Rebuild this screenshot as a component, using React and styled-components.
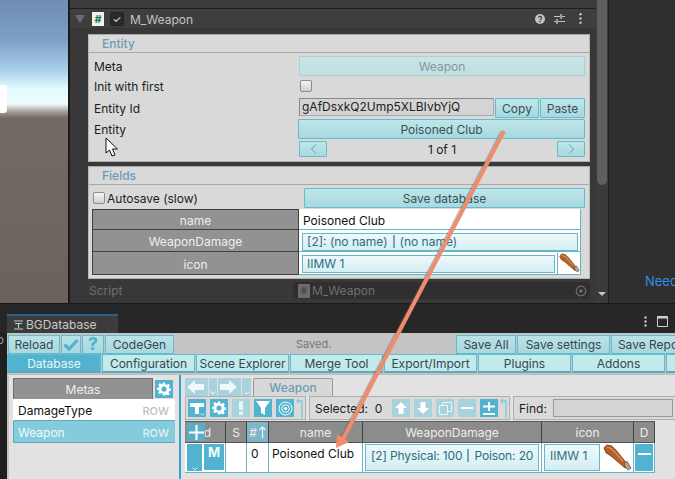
import React from "react";
import styled, { createGlobalStyle } from "styled-components";

const Global = createGlobalStyle`
  html, body { margin: 0; padding: 0; background: #1f1f1f; }
  * { box-sizing: border-box; }
`;

const Page = styled.div`
  position: relative;
  width: 675px;
  height: 479px;
  overflow: hidden;
  display: flex;
  flex-direction: column;
  font-family: Inter, "Liberation Sans", sans-serif;
  font-size: 12px;
  color: #1c1c1c;
  background: #1f1f1f;
`;
const Top = styled.div`
  height: 303px;
  display: flex;
  flex: none;
`;
const Scene = styled.div`
  width: 68px;
  flex: none;
  display: flex;
  align-items: flex-start;
  padding-top: 85px;
  background: linear-gradient(#6f8db5 0, #7ea0c6 40px, #a8d0e8 70px, #e0faff 88px, #f0fbfb 104px, #a09a96 112px, #736a65 118px, #6b625e 303px);
`;
const SceneChip = styled.div`
  width: 7px;
  height: 28px;
  background: #fff;
  border-radius: 0 3px 3px 0;
`;
const Split = styled.div`
  width: 2px;
  flex: none;
  background: #1b1b1b;
`;
const Inspector = styled.div`
  width: 526px;
  flex: none;
  display: flex;
  flex-direction: column;
  background: #383838;
`;
const Sliver = styled.div`
  height: 9px;
  flex: none;
  background: #3c3c3c;
  border-bottom: 1px solid #1e1e1e;
`;
const CompHead = styled.div`
  height: 20px;
  flex: none;
  display: flex;
  align-items: center;
  padding: 0 14px 0 5px;
  background: #3e3e3e;
  border-bottom: 1px solid #343434;
`;
const Tri = styled.div`
  width: 0;
  height: 0;
  border-left: 5px solid transparent;
  border-right: 5px solid transparent;
  border-top: 8px solid #6a6a6a;
  margin-right: 7px;
`;
const ScriptIcon = styled.div`
  width: 12px;
  height: 14px;
  flex: none;
  background: ${(p) => p.$bg || "#f2f2f2"};
  color: ${(p) => p.$fg || "#1e7a3a"};
  font-size: ${(p) => p.$size || 11}px;
  font-weight: 700;
  line-height: 14px;
  text-align: center;
  margin-right: 6px;
`;
const Toggle = styled.div`
  width: 14px;
  height: 14px;
  border-radius: 2px;
  background: #2a2a2a;
  border: 1px solid #212121;
  color: #eee;
  font-size: 10px;
  line-height: 12px;
  text-align: center;
  margin-right: 6px;
`;
const CompTitle = styled.div`
  color: #c4c4c4;
  font-size: 12px;
  flex: 1;
  padding-top: 1px;
`;
const HeadIcons = styled.div`
  display: flex;
  align-items: center;
  gap: 9px;
`;
const Panel = styled.div`
  margin: ${(p) => p.$top}px 0 0 18px;
  width: 502px;
  flex: none;
  background: #d9d9d9;
  border-top: 1px solid #a8a8a8;
  border-left: 1px solid #b8b8b8;
  border-right: 1px solid #b8b8b8;
  border-bottom: 1px solid #b0b0b0;
  height: ${(p) => p.$h}px;
  display: flex;
  flex-direction: column;
`;
const PanelHead = styled.div`
  height: 18px;
  flex: none;
  border-bottom: 1px solid #a8a8a8;
  padding-left: 13px;
  line-height: 17px;
  font-weight: 500;
  color: #6f9ab4;
  font-size: 12px;
`;
const FormRow = styled.div`
  display: grid;
  grid-template-columns: 205px 1fr;
  align-items: center;
  height: ${(p) => p.$h}px;
  margin-top: ${(p) => p.$mt || 0}px;
  padding: 0 4px 0 5px;
`;
const FieldLabel = styled.div`
  font-size: 12px;
  color: #1c1c1c;
`;
const TealBtn = styled.div`
  height: ${(p) => p.$h || 19}px;
  width: ${(p) => (p.$w ? p.$w + "px" : "auto")};
  flex: ${(p) => (p.$w ? "none" : 1)};
  margin-left: ${(p) => p.$ml || 0}px;
  display: flex;
  align-items: center;
  justify-content: center;
  border: 1px solid ${(p) => (p.$faded ? "#9ed4da" : "#62bccb")};
  border-radius: 1px;
  background: ${(p) =>
    p.$faded
      ? "linear-gradient(#cbe4e6, #c2dfe2)"
      : "linear-gradient(#bfe6e9, #a7d9df)"};
  color: ${(p) => (p.$faded ? "#83979c" : "#3b4f57")};
  font-size: 12px;
  white-space: nowrap;
`;
const Check = styled.div`
  width: 12px;
  height: 12px;
  flex: none;
  margin-left: ${(p) => p.$ml || 0}px;
  border: 1px solid #8c8c8c;
  border-radius: 2px;
  background: linear-gradient(#f6f6f6, #cfcfcf);
`;
const IdRow = styled.div`
  display: flex;
  align-items: flex-start;
  gap: 1px;
  height: 21px;
`;
const IdInput = styled.div`
  width: 195px;
  height: 18px;
  flex: none;
  background: #d4d4d4;
  border: 1px solid #888;
  border-right-color: #aaa;
  border-bottom-color: #aaa;
  font-size: 12px;
  line-height: 16px;
  padding-left: 2px;
  color: #222;
  white-space: nowrap;
`;
const EntityValue = styled.div`
  display: flex;
  margin-left: -1px;
`;
const NavRow = styled.div`
  display: grid;
  grid-template-columns: 28px 1fr 28px;
  align-items: center;
`;
const Counter = styled.div`
  text-align: center;
  font-size: 12px;
`;
const AutoRow = styled.div`
  display: flex;
  align-items: center;
  height: 20px;
  margin-top: 3px;
  padding: 0 4px 0 4px;
`;
const AutoLabel = styled.div`
  margin-left: 2px;
  width: 197px;
  font-size: 12px;
`;
const FieldsTable = styled.div`
  margin: 1px 0 0 3px;
  width: 489px;
  display: grid;
  grid-template-columns: 207px 1fr;
  grid-template-rows: 21px 22px 23px;
`;
const NameCell = styled.div`
  background: #929292;
  border: 1px solid #3f3f3f;
  border-top-width: ${(p) => (p.$first ? 1 : 0)}px;
  padding-top: 2px;
  display: flex;
  align-items: center;
  justify-content: center;
  color: #eeeeee;
  font-size: 12px;
`;
const ValueCell = styled.div`
  background: #fff;
  border-right: 1px solid #68b4c4;
  border-bottom: 1px solid #68b4c4;
  display: flex;
  align-items: center;
  padding: ${(p) => p.$pad || "2px 2px 0 3px"};
  font-size: 12px;
  color: #111;
`;
const LightField = styled.div`
  flex: ${(p) => (p.$w ? "none" : 1)};
  width: ${(p) => (p.$w ? p.$w + "px" : "auto")};
  height: ${(p) => p.$h || 18}px;
  display: flex;
  align-items: center;
  border: 1px solid #67b7c8;
  background: linear-gradient(#eef9fb, #d3eef3);
  color: #2c6f80;
  font-size: 12px;
  padding: 0 0 ${(p) => p.$pb || 0}px ${(p) => p.$pl || 4}px;
  letter-spacing: ${(p) => p.$ls || 0}px;
  white-space: nowrap;
`;
const Sep = styled.span`
  display: inline-block;
  width: 2px;
  height: 13px;
  margin: 0 5px 0 5px;
  background: #6ea9b8;
`;
const ThumbCell = styled.div`
  width: 23px;
  height: 21px;
  flex: none;
  margin-left: 2px;
  padding-left: 1px;
  border-left: 1px solid #68b4c4;
`;
const ScriptRow = styled.div`
  display: flex;
  align-items: center;
  height: 17px;
  margin-top: 3px;
  padding-left: 19px;
`;
const ScriptLabel = styled.div`
  width: 204px;
  color: #6f6f6f;
  font-size: 12px;
`;
const ScriptField = styled.div`
  width: 297px;
  height: 17px;
  display: flex;
  align-items: center;
  padding: 0 3px 0 5px;
  background: #2f2f2f;
  border-radius: 3px;
  color: #6f6f6f;
  font-size: 12px;
`;
const ScriptName = styled.div`
  flex: 1;
  margin-left: -4px;
`;
const Scroll = styled.div`
  width: 12px;
  flex: none;
  display: flex;
  flex-direction: column;
  align-items: center;
  background: #3a3a3a;
`;
const Thumb = styled.div`
  width: 10px;
  height: 185px;
  background: #5f5f5f;
  border-radius: 0 0 5px 5px;
`;
const ScrollArrow = styled.div`
  margin-top: 107px;
  width: 0;
  height: 0;
  border-left: 4px solid transparent;
  border-right: 4px solid transparent;
  border-top: 4px solid #c4c4c4;
`;
const RightPane = styled.div`
  flex: 1;
  background: #2f2f2f;
  border-left: 1px solid #1b1b1b;
  padding: 273px 0 0 36px;
  color: #2f8fe6;
  font-size: 13px;
  white-space: nowrap;
  overflow: hidden;
`;
const Bottom = styled.div`
  flex: 1;
  display: flex;
  flex-direction: column;
  background: #1f1f1f;
  min-height: 0;
`;
const TabStrip = styled.div`
  height: 30px;
  flex: none;
  display: flex;
  align-items: flex-end;
  padding-left: 7px;
  border-top: 1px solid #191919;
  background: #272727;
`;
const Tab = styled.div`
  width: 111px;
  height: 19px;
  background: #3c3c3c;
  border-top: 2px solid #2b5f8e;
  display: flex;
  align-items: center;
  padding-left: 6px;
  gap: 2px;
  color: #c8c8c8;
  font-size: 12px;
`;
const WinIcons = styled.div`
  margin-left: auto;
  display: flex;
  align-items: center;
  gap: 10px;
  height: 24px;
  width: 31px;
  flex: none;
  overflow: hidden;
`;
const BottomBody = styled.div`
  flex: 1;
  display: flex;
  min-height: 0;
`;
const LeftGutter = styled.div`
  width: 7px;
  flex: none;
  overflow: hidden;
  color: #999;
  font-size: 12px;
  line-height: 14px;
  text-indent: -7px;
  white-space: nowrap;
`;
const Win = styled.div`
  width: 668px;
  flex: none;
  display: flex;
  flex-direction: column;
  background: #c4c4c4;
  overflow: hidden;
`;
const ToolRow = styled.div`
  height: 21px;
  flex: none;
  display: flex;
  align-items: center;
  padding: 1px 0 0 1px;
  gap: 1px;
`;
const ToolBtn = styled.div`
  width: ${(p) => p.$w}px;
  height: 19px;
  flex: none;
  display: flex;
  align-items: center;
  justify-content: center;
  border: 1px solid #62bccb;
  background: linear-gradient(#b9e2e7, #a8d8df);
  color: #35474f;
  font-size: 12px;
  white-space: nowrap;
  overflow: hidden;
`;
const HelpMark = styled.span`
  color: #4fb2d0;
  font-weight: 800;
  font-size: 17px;
`;
const Saved = styled.div`
  margin-left: 121px;
  width: 159px;
  flex: none;
  color: #777;
  font-size: 11px;
`;
const TabsRow = styled.div`
  height: 19px;
  flex: none;
  display: flex;
  gap: 1px;
`;
const WinTab = styled.div`
  width: ${(p) => p.$w}px;
  flex: none;
  height: 19px;
  display: flex;
  align-items: center;
  justify-content: center;
  white-space: nowrap;
  font-size: 12px;
  border: 1px solid #62bccb;
  border-bottom: 2px solid #62a8bb;
  background: ${(p) => (p.$active ? "#52b3d1" : "linear-gradient(#c5ecec, #bfe9ea)")};
  color: ${(p) => (p.$active ? "#e8f6fa" : "#35474f")};
`;
const Content = styled.div`
  flex: 1;
  margin: 1px 0 0 2px;
  display: flex;
  background: #e2e2e2;
  border-top: 1px solid #bdbdbd;
  min-height: 0;
`;
const MetaPane = styled.div`
  width: 170px;
  flex: none;
  padding: 3px 4px 0 4px;
`;
const MetaHead = styled.div`
  display: flex;
  align-items: center;
  gap: 2px;
`;
const MetaTitle = styled.div`
  width: 140px;
  height: 21px;
  background: #929292;
  border: 1px solid #6e6e6e;
  border-bottom: none;
  color: #eee;
  display: flex;
  align-items: center;
  justify-content: center;
  font-size: 12px;
`;
const IconBtn = styled.div`
  width: 18px;
  height: 18px;
  flex: none;
  background: ${(p) => (p.$dim ? "#a8d2dc" : "#52b3d1")};
  display: flex;
  align-items: center;
  justify-content: center;
  position: relative;
`;
const MiniChevron = styled.svg`
  position: absolute;
  right: 1px;
  bottom: 1px;
`;
const MetaRow = styled.div`
  width: 162px;
  height: 22px;
  display: flex;
  align-items: center;
  justify-content: space-between;
  padding: 2px 6px 0 4px;
  font-size: 12px;
  background: ${(p) => (p.$sel ? "#85cbde" : "#fff")};
  color: ${(p) => (p.$sel ? "#f2fafc" : "#111")};
  border-bottom: 1px solid #62a9bc;
  border-left: 1px solid ${(p) => (p.$sel ? "#62a9bc" : "#fff")};
`;
const RowTag = styled.span`
  font-size: 11px;
  font-weight: 500;
  color: ${(p) => (p.$sel ? "#e0f3f7" : "#c0c0c0")};
`;
const VDiv = styled.div`
  width: 2px;
  flex: none;
  background: #2fa3c9;
`;
const MainPane = styled.div`
  flex: 1;
  padding: 3px 0 0 4px;
  min-width: 0;
  display: flex;
  flex-direction: column;
`;
const NavBar = styled.div`
  display: flex;
  align-items: flex-end;
  height: 18px;
  flex: none;
  gap: 1px;
`;
const NavBtn = styled.div`
  width: 23px;
  height: 18px;
  flex: none;
  background: #a8d2dc;
  display: flex;
  align-items: center;
  padding-left: 2px;
`;
const NavDrop = styled.div`
  width: ${(p) => p.$w || 8}px;
  height: 18px;
  flex: none;
  background: #a8d2dc;
  display: flex;
  align-items: flex-end;
  justify-content: center;
  padding-bottom: 1px;
`;
const MetaTab = styled.div`
  width: 80px;
  height: 18px;
  flex: none;
  margin-left: 1px;
  background: #d8d8d8;
  border: 1px solid #9a9a9a;
  border-bottom: none;
  border-radius: 2px 2px 0 0;
  color: #6f9ab4;
  font-weight: 500;
  display: flex;
  align-items: center;
  justify-content: center;
  font-size: 12px;
`;
const BarRow = styled.div`
  height: 25px;
  flex: none;
  display: flex;
  gap: 3px;
`;
const BarBox = styled.div`
  width: ${(p) => p.$w}px;
  flex: none;
  height: 24px;
  background: #dadada;
  border: 1px solid #b0b0b0;
  display: flex;
  align-items: center;
  gap: ${(p) => p.$gap || 4}px;
  padding: 0 0 0 ${(p) => p.$pl || 2}px;
  font-size: 12px;
  white-space: nowrap;
`;
const SelectedLabel = styled.span`
  width: 73px;
  flex: none;
`;
const ReturnIcon = styled.svg`
  margin-left: -2px;
  flex: none;
`;
const FindInput = styled.div`
  width: 120px;
  height: 18px;
  background: #d4d4d4;
  border: 1px solid #9a9a9a;
`;
const GridTable = styled.div`
  display: grid;
  grid-template-columns: 41px 21px 22px 94px 179px 92px 21px;
  grid-template-rows: 22px 30px;
  width: 470px;
  position: relative;
`;
const GridHead = styled.div`
  background: ${(p) => (p.$blue ? "#7fb5c4" : "#8c8c8c")};
  border-right: 1px solid #444;
  border-top: 1px solid #5a5a5a;
  border-bottom: 1px solid #555;
  color: #ededed;
  display: flex;
  align-items: center;
  justify-content: ${(p) => p.$justify || "center"};
  padding-right: ${(p) => p.$pr || 0}px;
  font-size: 12px;
  white-space: nowrap;
  gap: 2px;
`;
const GridCell = styled.div`
  background: #fff;
  border-right: 1px solid #68b4c4;
  border-bottom: 1px solid #68b4c4;
  display: flex;
  align-items: flex-start;
  padding: ${(p) => p.$pad || "1px 0 0 0"};
  gap: ${(p) => p.$gap || 0}px;
  font-size: 12px;
  color: #111;
  white-space: nowrap;
`;
const AddBtn = styled.div`
  position: absolute;
  left: 2px;
  top: 2px;
  width: 18px;
  height: 18px;
  background: rgba(82, 179, 209, 0.85);
  display: flex;
  align-items: center;
  justify-content: center;
`;
const RowBlock = styled.div`
  width: ${(p) => p.$w}px;
  height: ${(p) => p.$h}px;
  flex: none;
  background: #52b3d1;
  color: #f4fbfd;
  font-weight: 700;
  font-size: 13px;
  display: flex;
  justify-content: center;
  align-items: ${(p) => p.$align || "flex-start"};
  padding-top: ${(p) => p.$pt || 0}px;
  position: relative;
`;
const Overlay = styled.svg`
  position: absolute;
  left: 0;
  top: 0;
  pointer-events: none;
`;
const Pointer = styled.svg`
  position: absolute;
  left: 105px;
  top: 137px;
`;

const Gear = ({ s = 14, c = "#fff" }) => (
  <svg width={s} height={s} viewBox="0 0 24 24">
    <path
      fill={c}
      fillRule="evenodd"
      d="M10 1h4l.6 3.2 2 .8 2.700-1.900 2.800 2.800-1.900 2.700.8 2 3 .6v4l-3.200.6-.8 2 1.900 2.700-2.800 2.800-2.700-1.900-2 .8L14 23h-4l-.6-3.200-2-.8-2.700 1.900-2.800-2.800 1.900-2.700-.8-2L0 14v-4l3.200-.6.8-2L2.100 4.700 4.900 1.900l2.700 1.900 2-.8zM12 7.500a4.500 4.500 0 1 0 0 9 4.500 4.500 0 0 0 0-9z"
    />
  </svg>
);
const Club = ({ w, h }) => (
  <svg width={w} height={h} viewBox="0 0 30 28">
    <path d="M1 4 L4 1 L9 2 L14 7 L26 22 L23 25 L9 13 L3 9 Z" fill="#b5622a" stroke="#6e3a16" strokeWidth="0.9" />
    <path d="M4 3 L9 5 L21 18" stroke="#d98b4c" strokeWidth="1.500" fill="none" />
    <path d="M22 20 L25 18 L29 25 L26 27 L23 24 Z" fill="#a9a699" stroke="#6e3a16" strokeWidth="0.7" />
  </svg>
);
const UpArrow = ({ r = 0 }) => (
  <svg width="14" height="14" viewBox="0 0 14 14" style={{ transform: `rotate(${r}deg)` }}>
    <path d="M7 1 L13 7 H9.500 V13 H4.500 V7 H1 Z" fill="#fff" />
  </svg>
);
const NavArrow = ({ flip }) => (
  <svg width="17" height="14" viewBox="0 0 17 14" style={{ transform: flip ? "scaleX(-1)" : "none" }}>
    <path d="M0 7 L8 0 V4 H17 V10 H8 V14 Z" fill="#eef8fa" />
  </svg>
);
const Chevron = ({ c = "#f4fbfd" }) => (
  <svg width="6" height="4" viewBox="0 0 6 4">
    <path d="M.5.500 3 3 5.500.5" stroke={c} fill="none" />
  </svg>
);
const ReturnArrow = () => (
  <ReturnIcon width="8" height="20" viewBox="0 0 8 20">
    <path d="M6 20V3H2" stroke="#7ccadf" strokeWidth="1.400" fill="none" />
    <path d="M0 3 3 0v6z" fill="#7ccadf" />
  </ReturnIcon>
);

export default function App() {
  return (
    <Page>
      <Global />
      <Top>
        <Scene>
          <SceneChip />
        </Scene>
        <Split />
        <Inspector>
          <Sliver />
          <CompHead>
            <Tri />
            <ScriptIcon>#</ScriptIcon>
            <Toggle>✓</Toggle>
            <CompTitle>M_Weapon</CompTitle>
            <HeadIcons>
              <svg width="10" height="10" viewBox="0 0 12 12">
                <circle cx="6" cy="6" r="6" fill="#c4c4c4" />
                <path d="M4.300 4.600a1.800 1.800 0 1 1 2.600 1.600c-.6.300-.9.600-.9 1.200" stroke="#3e3e3e" strokeWidth="1.400" fill="none" />
                <rect x="5.200" y="8.300" width="1.600" height="1.600" fill="#3e3e3e" />
              </svg>
              <svg width="11" height="10" viewBox="0 0 11 10">
                <path d="M0 2.500h6M8 2.500h3M0 7.500h2M4 7.500h7" stroke="#c4c4c4" strokeWidth="1.200" />
                <path d="M7 0v5M3 5v5" stroke="#c4c4c4" strokeWidth="1.400" />
              </svg>
              <svg width="3" height="11" viewBox="0 0 3 11" style={{ marginLeft: 5 }}>
                <circle cx="1.500" cy="1.300" r="1.200" fill="#c4c4c4" />
                <circle cx="1.500" cy="5.500" r="1.200" fill="#c4c4c4" />
                <circle cx="1.500" cy="9.700" r="1.200" fill="#c4c4c4" />
              </svg>
            </HeadIcons>
          </CompHead>
          <Panel $top={5} $h={128}>
            <PanelHead>Entity</PanelHead>
            <FormRow $h={20} $mt={3}>
              <FieldLabel>Meta</FieldLabel>
              <TealBtn $faded $h={20}>Weapon</TealBtn>
            </FormRow>
            <FormRow $h={18} $mt={1}>
              <FieldLabel>Init with first</FieldLabel>
              <Check $ml={1} />
            </FormRow>
            <FormRow $h={21} $mt={3}>
              <FieldLabel>Entity Id</FieldLabel>
              <IdRow>
                <IdInput>gAfDsxkQ2Ump5XLBIvbYjQ</IdInput>
                <TealBtn $w={44} $h={20}>Copy</TealBtn>
                <TealBtn $w={45} $h={20}>Paste</TealBtn>
              </IdRow>
            </FormRow>
            <FormRow $h={20}>
              <FieldLabel>Entity</FieldLabel>
              <EntityValue>
                <TealBtn $h={20}>Poisoned Club</TealBtn>
              </EntityValue>
            </FormRow>
            <FormRow $h={16} $mt={2}>
              <span />
              <NavRow>
                <TealBtn $h={16}>
                  <svg width="7" height="10" viewBox="0 0 7 10"><path d="M6 .5 1.500 5 6 9.500" stroke="#4aa7bd" fill="none" /></svg>
                </TealBtn>
                <Counter>1 of 1</Counter>
                <TealBtn $h={16}>
                  <svg width="7" height="10" viewBox="0 0 7 10"><path d="M1 .5 5.500 5 1 9.500" stroke="#4aa7bd" fill="none" /></svg>
                </TealBtn>
              </NavRow>
            </FormRow>
          </Panel>
          <Panel $top={4} $h={113}>
            <PanelHead>Fields</PanelHead>
            <AutoRow>
              <Check $ml={0} />
              <AutoLabel>Autosave (slow)</AutoLabel>
              <TealBtn $h={20}>Save database</TealBtn>
            </AutoRow>
            <FieldsTable>
              <NameCell $first>name</NameCell>
              <ValueCell $pad="2px 4px 0">Poisoned Club</ValueCell>
              <NameCell>WeaponDamage</NameCell>
              <ValueCell>
                <LightField $h={18}>
                  [2]: (no name)<Sep />(no name)
                </LightField>
              </ValueCell>
              <NameCell>icon</NameCell>
              <ValueCell $pad="1px 0 0 3px">
                <LightField $h={18}>IIMW 1</LightField>
                <ThumbCell>
                  <Club w={21} h={20} />
                </ThumbCell>
              </ValueCell>
            </FieldsTable>
          </Panel>
          <ScriptRow>
            <ScriptLabel>Script</ScriptLabel>
            <ScriptField>
              <ScriptIcon $bg="#6c6c6c" $fg="#2f4f38" $size={9}>#</ScriptIcon>
              <ScriptName>M_Weapon</ScriptName>
              <svg width="12" height="12" viewBox="0 0 12 12">
                <circle cx="6" cy="6" r="4.800" stroke="#6f6f6f" strokeWidth="1.200" fill="none" />
                <circle cx="6" cy="6" r="1.800" fill="#6f6f6f" />
              </svg>
            </ScriptField>
          </ScriptRow>
        </Inspector>
        <Scroll>
          <Thumb />
          <ScrollArrow />
        </Scroll>
        <RightPane>Need</RightPane>
      </Top>
      <Bottom>
        <TabStrip>
          <Tab>
            <svg width="11" height="10" viewBox="0 0 11 10">
              <path d="M1 1h9M2 3.500h7M5.500 3.500V8M1 9h9" stroke="#c8c8c8" strokeWidth="1.100" />
            </svg>
            BGDatabase
          </Tab>
          <WinIcons>
            <svg width="3" height="11" viewBox="0 0 3 11">
              <circle cx="1.500" cy="1.500" r="1.200" fill="#c4c4c4" />
              <circle cx="1.500" cy="5.500" r="1.200" fill="#c4c4c4" />
              <circle cx="1.500" cy="9.500" r="1.200" fill="#c4c4c4" />
            </svg>
            <svg width="11" height="11" viewBox="0 0 11 11">
              <path d="M.5.500h10v10H.5z" stroke="#d0d0d0" fill="none" />
              <path d="M0 1.500h11" stroke="#d0d0d0" strokeWidth="2" />
            </svg>
          </WinIcons>
        </TabStrip>
        <BottomBody>
          <LeftGutter>to</LeftGutter>
          <Win>
            <ToolRow>
              <ToolBtn $w={52}>Reload</ToolBtn>
              <ToolBtn $w={20}>
                <svg width="16" height="13" viewBox="0 0 16 13"><path d="M1.500 6.500 6 11l8.500-9" stroke="#4fb2d0" strokeWidth="3.200" fill="none" /></svg>
              </ToolBtn>
              <ToolBtn $w={22}><HelpMark>?</HelpMark></ToolBtn>
              <ToolBtn $w={69}>CodeGen</ToolBtn>
              <Saved>Saved.</Saved>
              <ToolBtn $w={60}>Save All</ToolBtn>
              <ToolBtn $w={93}>Save settings</ToolBtn>
              <ToolBtn $w={74}>Save Repo</ToolBtn>
            </ToolRow>
            <TabsRow>
              <WinTab $w={94} $active>Database</WinTab>
              <WinTab $w={93}>Configuration</WinTab>
              <WinTab $w={93}>Scene Explorer</WinTab>
              <WinTab $w={93}>Merge Tool</WinTab>
              <WinTab $w={93}>Export/Import</WinTab>
              <WinTab $w={93}>Plugins</WinTab>
              <WinTab $w={93}>Addons</WinTab>
              <WinTab $w={20} />
            </TabsRow>
            <Content>
              <MetaPane>
                <MetaHead>
                  <MetaTitle>Metas</MetaTitle>
                  <IconBtn><Gear s={14} /></IconBtn>
                </MetaHead>
                <MetaRow>DamageType<RowTag>ROW</RowTag></MetaRow>
                <MetaRow $sel>Weapon<RowTag $sel>ROW</RowTag></MetaRow>
              </MetaPane>
              <VDiv />
              <MainPane>
                <NavBar>
                  <NavBtn><NavArrow /></NavBtn>
                  <NavDrop><Chevron /></NavDrop>
                  <NavBtn><NavArrow flip /></NavBtn>
                  <NavDrop $w={9}><Chevron /></NavDrop>
                  <MetaTab>Weapon</MetaTab>
                </NavBar>
                <BarRow>
                  <BarBox $w={121} $gap={4}>
                    <IconBtn>
                      <svg width="14" height="13" viewBox="0 0 14 13"><path d="M0 1h14v4H9v7H5V5H0z" fill="#fff" /></svg>
                      <MiniChevron width="5" height="3" viewBox="0 0 6 4"><path d="M.5.500 3 3 5.500.5" stroke="#fff" fill="none" /></MiniChevron>
                    </IconBtn>
                    <IconBtn><Gear s={14} /></IconBtn>
                    <IconBtn $dim>
                      <svg width="4" height="14" viewBox="0 0 4 14"><path d="M0 0h4v9H0zM0 10.500h4V14H0z" fill="#e8f4f6" /></svg>
                    </IconBtn>
                    <IconBtn>
                      <svg width="14" height="14" viewBox="0 0 14 14"><path d="M0 0h14L9 7v7L5 12V7z" fill="#fff" /></svg>
                    </IconBtn>
                    <IconBtn>
                      <svg width="15" height="15" viewBox="0 0 15 15" fill="none" stroke="#fff">
                        <circle cx="7.500" cy="7.500" r="6.500" />
                        <circle cx="7.500" cy="7.500" r="3.800" />
                        <circle cx="7.500" cy="7.500" r="1.200" fill="#fff" />
                      </svg>
                    </IconBtn>
                    <ReturnArrow />
                  </BarBox>
                  <BarBox $w={201} $gap={4} $pl={5}>
                    <SelectedLabel>Selected:&nbsp; 0</SelectedLabel>
                    <IconBtn $dim><UpArrow /></IconBtn>
                    <IconBtn $dim><UpArrow r={180} /></IconBtn>
                    <IconBtn $dim>
                      <svg width="13" height="13" viewBox="0 0 13 13" fill="none" stroke="#e8f4f6"><path d="M.5 3.500h8v9h-8zM3.500 3V.5h9v9H9" /></svg>
                    </IconBtn>
                    <IconBtn $dim>
                      <svg width="12" height="2" viewBox="0 0 12 2"><path d="M0 0h12v2H0z" fill="#fff" /></svg>
                    </IconBtn>
                    <IconBtn>
                      <svg width="12" height="13" viewBox="0 0 12 13"><path d="M5 0h2v3.500h5v2H7V9H5V5.500H0v-2h5zM0 11h12v2H0z" fill="#fff" /></svg>
                    </IconBtn>
                    <ReturnArrow />
                  </BarBox>
                  <BarBox $w={170} $gap={6} $pl={5}>
                    Find:<FindInput />
                  </BarBox>
                </BarRow>
                <GridTable>
                  <GridHead $justify="flex-end" $pr={14}>d</GridHead>
                  <AddBtn>
                    <svg width="15" height="15" viewBox="0 0 15 15"><path d="M6.500 0h2v6.500H15v2H8.500V15h-2V8.500H0v-2h6.500z" fill="#fff" /></svg>
                  </AddBtn>
                  <GridHead>S</GridHead>
                  <GridHead $blue>#
                    <svg width="7" height="12" viewBox="0 0 7 12"><path d="M3.500 12V1M.5 4l3-3 3 3" stroke="#eef8fa" strokeWidth="1.200" fill="none" /></svg>
                  </GridHead>
                  <GridHead>name</GridHead>
                  <GridHead>WeaponDamage</GridHead>
                  <GridHead>icon</GridHead>
                  <GridHead>D</GridHead>
                  <GridCell $pad="1px 0 0 2px" $gap={2}>
                    <RowBlock $w={15} $h={27} $align="flex-end">
                      <Chevron c="#d8f0f6" />
                    </RowBlock>
                    <RowBlock $w={20} $h={26}>M</RowBlock>
                  </GridCell>
                  <GridCell />
                  <GridCell $pad="3px 0 0 4px">0</GridCell>
                  <GridCell $pad="3px 0 0 3px">Poisoned Club</GridCell>
                  <GridCell $pad="1px 2px 0 2px">
                    <LightField $h={27} $pl={5} $pb={5} $ls={-0.12}>[2] Physical: 100<Sep />Poison: 20</LightField>
                  </GridCell>
                  <GridCell $pad="1px 0 0 2px" $gap={3}>
                    <LightField $h={27} $pl={5} $pb={5} $w={56}>IIMW 1</LightField>
                    <Club w={29} h={27} />
                  </GridCell>
                  <GridCell $pad="1px 0 0 1px">
                    <RowBlock $w={18} $h={27} $pt={9}>
                      <svg width="13" height="2" viewBox="0 0 13 2"><path d="M0 0h13v2H0z" fill="#fff" /></svg>
                    </RowBlock>
                  </GridCell>
                </GridTable>
              </MainPane>
            </Content>
          </Win>
        </BottomBody>
      </Bottom>
      <Overlay width="675" height="479" viewBox="0 0 675 479">
        <path d="M504 131 L343 439" stroke="#5a5a5a" strokeOpacity="0.35" strokeWidth="4" transform="translate(-2 1)" />
        <path d="M504 131 L343 439" stroke="#f08b6d" strokeWidth="4" />
        <path d="M336 448 L337 434 L349 442 Z" fill="#f08b6d" />
      </Overlay>
      <Pointer width="14" height="21" viewBox="0 0 14 21">
        <path d="M1 1 V16 L4.500 13 L7 19 L10 18 L7.500 12 L12.500 12 Z" fill="#fff" stroke="#111" strokeWidth="1" />
      </Pointer>
    </Page>
  );
}
